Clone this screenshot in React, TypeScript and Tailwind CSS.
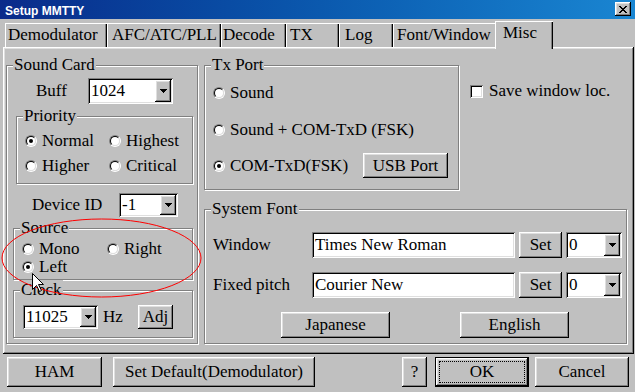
import React from "react";

const RAISED =
  "bg-[#c0c0c0] shadow-[inset_-1px_-1px_0_#000,inset_1px_1px_0_#fff,inset_-2px_-2px_0_#808080,inset_2px_2px_0_#dfdfdf]";
const SUNKEN =
  "bg-white shadow-[inset_1px_1px_0_#808080,inset_-1px_-1px_0_#fff,inset_2px_2px_0_#000,inset_-2px_-2px_0_#dfdfdf]";
const ETCHED = "border border-[#808080] shadow-[inset_1px_1px_0_#fff,1px_1px_0_#fff]";
const TAB =
  "bg-[#c0c0c0] shadow-[inset_1px_1px_0_#fff,inset_-1px_0_0_#000,inset_-2px_0_0_#808080]";

function CloseX() {
  const rows = ["11....11", ".11..11.", "..1111..", "...11...", "..1111..", ".11..11.", "11....11"];
  return (
    <svg width="8" height="7" viewBox="0 0 8 7" shapeRendering="crispEdges">
      {rows.flatMap((r, y) =>
        r.split("").map((c, x) => (c === "1" ? <rect key={`${x}-${y}`} x={x} y={y} width="1" height="1" fill="#000" /> : null))
      )}
    </svg>
  );
}

function Arrow() {
  return (
    <svg width="7" height="4" viewBox="0 0 7 4" shapeRendering="crispEdges">
      <rect x="0" y="0" width="7" height="1" fill="#000" />
      <rect x="1" y="1" width="5" height="1" fill="#000" />
      <rect x="2" y="2" width="3" height="1" fill="#000" />
      <rect x="3" y="3" width="1" height="1" fill="#000" />
    </svg>
  );
}

function Radio({ checked }: { checked?: boolean }) {
  return (
    <span className="inline-flex h-[12px] w-[12px] shrink-0 rounded-full border border-t-[#808080] border-l-[#808080] border-r-white border-b-white">
      <span className="flex h-full w-full items-center justify-center rounded-full border border-t-black border-l-black border-r-[#dfdfdf] border-b-[#dfdfdf] bg-white">
        {checked && <span className="h-[4px] w-[4px] rounded-full bg-black" />}
      </span>
    </span>
  );
}

function RadioItem({ label, checked, className = "" }: { label: string; checked?: boolean; className?: string }) {
  return (
    <div className={`flex items-center gap-[5px] whitespace-nowrap ${className}`}>
      <Radio checked={checked} />
      <span>{label}</span>
    </div>
  );
}

function Group({ label, className = "", children }: { label: string; className?: string; children?: React.ReactNode }) {
  return (
    <div className={`relative flex shrink-0 flex-col items-start ${ETCHED} ${className}`}>
      <span className="absolute left-[6px] top-[-11px] bg-[#c0c0c0] px-[1px] leading-[20px] whitespace-nowrap">{label}</span>
      {children}
    </div>
  );
}

function Combo({ value, className = "" }: { value: string; className?: string }) {
  return (
    <div className={`flex shrink-0 p-[2px] ${SUNKEN} ${className}`}>
      <span className="flex flex-1 items-center pl-[1px]">{value}</span>
      <span className={`flex w-[16px] items-center justify-center ${RAISED}`}>
        <Arrow />
      </span>
    </div>
  );
}

function Button({ children, className = "" }: { children: React.ReactNode; className?: string }) {
  return (
    <div className={`flex shrink-0 items-center justify-center whitespace-nowrap ${RAISED} ${className}`}>{children}</div>
  );
}

export default function App() {
  const tabs: [string, string][] = [
    ["Demodulator", "w-[102px] pl-[3px]"],
    ["AFC/ATC/PLL", "w-[114px] pl-[5px]"],
    ["Decode", "w-[65px] pl-[2px]"],
    ["TX", "w-[53px] pl-[4px]"],
    ["Log", "w-[54px] pl-[6px]"],
    ["Font/Window", "w-[104px] pl-[4px]"],
  ];
  return (
    <div className="relative h-[392px] w-[635px] overflow-hidden bg-[#c0c0c0] [font-family:'Liberation_Serif','Times_New_Roman',serif] text-[17px] leading-[20px] text-black">
      {/* Title bar */}
      <div className="flex h-[19px] items-start bg-linear-to-r from-[#0a2a8a] to-[#1a86d2]">
        <span className="ml-[5px] mt-[5px] [font-family:'Liberation_Sans',Arial,sans-serif] text-[12px] font-bold leading-[12px] text-white">
          Setup MMTTY
        </span>
        <div className={`ml-auto mr-[4px] mt-[2px] flex h-[14px] w-[16px] items-center justify-center ${RAISED}`}>
          <CloseX />
        </div>
      </div>

      {/* Tabs */}
      <div className="relative z-10 mt-[2px] flex h-[26px] items-end pl-[5px]">
        {tabs.map(([t, c]) => (
          <div key={t} className={`flex h-[24px] shrink-0 items-start whitespace-nowrap pt-[2px] ${TAB} ${c}`}>
            {t}
          </div>
        ))}
        <div className={`-mb-[2px] -ml-[2px] flex h-[28px] w-[58px] shrink-0 items-start pl-[8px] pt-[2px] ${TAB}`}>Misc</div>
      </div>

      {/* Tab page */}
      <div className={`ml-[3px] flex h-[307px] w-[631px] pl-[3px] pt-[18px] ${RAISED}`}>
        {/* Sound Card */}
        <Group label="Sound Card" className="h-[279px] w-[192px]">
          <div className="mt-[12px] flex h-[26px] items-center">
            <span className="ml-[29px] w-[52px]">Buff</span>
            <Combo value="1024" className="h-[26px] w-[85px]" />
          </div>
          <Group label="Priority" className="ml-[9px] mt-[12px] h-[68px] w-[177px]">
            <div className="ml-[8px] mt-[15px] flex h-[18px]">
              <RadioItem className="w-[84px]" label="Normal" checked />
              <RadioItem label="Highest" />
            </div>
            <div className="ml-[8px] mt-[7px] flex h-[18px]">
              <RadioItem className="w-[84px]" label="Higher" />
              <RadioItem label="Critical" />
            </div>
          </Group>
          <div className="mt-[9px] flex h-[24px] items-center">
            <span className="ml-[25px] w-[87px] whitespace-nowrap">Device ID</span>
            <Combo value="-1" className="h-[24px] w-[59px]" />
          </div>
          <Group label="Source" className="ml-[6px] mt-[11px] h-[52px] w-[180px]">
            <div className="ml-[8px] mt-[11px] flex h-[18px]">
              <RadioItem className="w-[85px]" label="Mono" />
              <RadioItem label="Right" />
            </div>
            <div className="ml-[8px] flex h-[18px]">
              <RadioItem label="Left" checked />
            </div>
          </Group>
          <Group label="Clock" className="ml-[6px] mt-[10px] h-[48px] w-[180px]">
            <div className="ml-[9px] mt-[14px] flex h-[24px] items-center">
              <Combo value="11025" className="h-[24px] w-[75px]" />
              <span className="ml-[5px] w-[35px]">Hz</span>
              <Button className="h-[24px] w-[35px]">Adj</Button>
            </div>
          </Group>
        </Group>

        {/* Right column */}
        <div className="ml-[6px] flex flex-col">
          <div className="flex items-start">
            <Group label="Tx Port" className="h-[125px] w-[255px]">
              <RadioItem className="ml-[8px] mt-[18px] h-[18px]" label="Sound" />
              <RadioItem className="ml-[8px] mt-[19px] h-[18px]" label="Sound + COM-TxD (FSK)" />
              <div className="ml-[8px] mt-[14px] flex h-[25px] items-center">
                <RadioItem className="w-[150px]" label="COM-TxD(FSK)" checked />
                <Button className="h-[25px] w-[85px]">USB Port</Button>
              </div>
            </Group>
            <div className="ml-[11px] mt-[17px] flex h-[18px] items-center gap-[6px] whitespace-nowrap">
              <span className={`h-[13px] w-[13px] shrink-0 ${SUNKEN}`} />
              <span>Save window loc.</span>
            </div>
          </div>
          <Group label="System Font" className="mt-[19px] h-[135px] w-[423px]">
            <div className="mt-[22px] flex h-[26px] items-center">
              <span className="ml-[8px] w-[99px]">Window</span>
              <div className={`flex h-[26px] w-[203px] items-center pl-[3px] ${SUNKEN}`}>Times New Roman</div>
              <Button className="ml-[4px] h-[26px] w-[43px]">Set</Button>
              <Combo value="0" className="ml-[4px] h-[26px] w-[56px]" />
            </div>
            <div className="mt-[14px] flex h-[26px] items-center">
              <span className="ml-[8px] w-[99px] whitespace-nowrap">Fixed pitch</span>
              <div className={`flex h-[26px] w-[203px] items-center pl-[3px] ${SUNKEN}`}>Courier New</div>
              <Button className="ml-[4px] h-[26px] w-[43px]">Set</Button>
              <Combo value="0" className="ml-[4px] h-[26px] w-[56px]" />
            </div>
            <div className="mt-[14px] flex h-[26px]">
              <Button className="ml-[76px] h-[26px] w-[109px]">Japanese</Button>
              <Button className="ml-[70px] h-[26px] w-[109px]">English</Button>
            </div>
          </Group>
        </div>
      </div>

      {/* Bottom buttons */}
      <div className="mt-[3px] flex h-[30px]">
        <Button className="ml-[7px] h-[30px] w-[95px]">HAM</Button>
        <Button className="ml-[11px] h-[30px] w-[202px]">Set Default(Demodulator)</Button>
        <Button className="ml-[87px] h-[30px] w-[25px]">?</Button>
        <div className="ml-[8px] flex h-[30px] w-[94px] border border-black">
          <div className={`flex flex-1 p-[3px] ${RAISED}`}>
            <div className="flex flex-1 items-center justify-center border border-dotted border-black">OK</div>
          </div>
        </div>
        <Button className="ml-[6px] h-[30px] w-[94px]">Cancel</Button>
      </div>

      {/* Annotation overlay: red ellipse + mouse pointer */}
      <svg className="pointer-events-none absolute left-0 top-0" width="635" height="392">
        <ellipse cx="101.5" cy="258" rx="99.5" ry="39" fill="none" stroke="#ff0000" strokeWidth="1" />
      </svg>
      <svg className="pointer-events-none absolute left-[32px] top-[273px]" width="13" height="20" viewBox="0 0 13 20">
        <path d="M0.5 0.5 V16.5 L4.5 12.5 L7.5 18.5 L9.5 17.5 L6.5 11.5 H11.5 Z" fill="#fff" stroke="#000" strokeWidth="1" />
      </svg>
    </div>
  );
}
